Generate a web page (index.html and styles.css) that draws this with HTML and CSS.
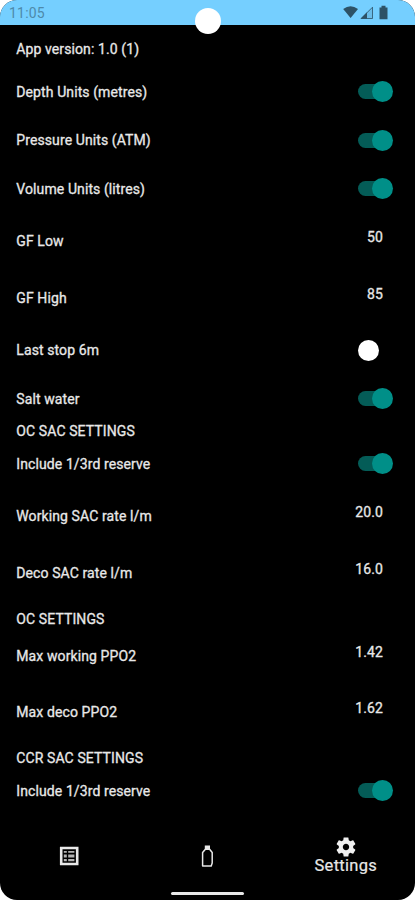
FILE: index.html
```
<!DOCTYPE html>
<html lang="en">
  <head>
    <meta charset="utf-8" />
    <title>Settings</title>
    <link rel="stylesheet" href="styles.css" />
  </head>

  <body>
    <div class="phone">
      <!-- Android status bar -->
      <div class="status-bar">
        <span class="clock">11:05</span>
        <div class="camera"></div>
        <svg class="status-icons" width="48" height="16" viewBox="0 0 48 16">
          <path d="M0.2 4 Q7.5 -1.5 15 4 L7.6 13 Z" />
          <path d="M18 13.5 L30 1.5 V13.5 Z" opacity="0.15" />
          <path d="M17.5 13.8 L24 7.3 V13.8 Z" />
          <path d="M18.2 13.5 L29.5 2.2 V13.5 Z" fill="none" stroke="#2d5266" stroke-width="0.8" />
          <path d="M36.5 2.5 h2 v-1.7 h4 v1.7 h2 v11.7 h-8 z" />
        </svg>
      </div>

      <!-- Settings list -->
      <div class="settings">
        <p class="header version">App version: 1.0 (1)</p>
        <div class="row"><span>Depth Units (metres)</span><button class="switch on"></button></div>
        <div class="row"><span>Pressure Units (ATM)</span><button class="switch on"></button></div>
        <div class="row"><span>Volume Units (litres)</span><button class="switch on"></button></div>
        <div class="row entry"><span>GF Low</span><span class="value">50</span></div>
        <div class="row entry"><span>GF High</span><span class="value">85</span></div>
        <div class="row"><span>Last stop 6m</span><button class="switch"></button></div>
        <div class="row"><span>Salt water</span><button class="switch on"></button></div>

        <p class="header">OC SAC SETTINGS</p>
        <div class="row"><span>Include 1/3rd reserve</span><button class="switch on"></button></div>
        <div class="row entry"><span>Working SAC rate l/m</span><span class="value">20.0</span></div>
        <div class="row entry"><span>Deco SAC rate l/m</span><span class="value">16.0</span></div>

        <p class="header spaced">OC SETTINGS</p>
        <div class="row entry"><span>Max working PPO2</span><span class="value">1.42</span></div>
        <div class="row entry"><span>Max deco PPO2</span><span class="value">1.62</span></div>

        <p class="header spaced">CCR SAC SETTINGS</p>
        <div class="row"><span>Include 1/3rd reserve</span><button class="switch on"></button></div>
      </div>

      <!-- Bottom tabs -->
      <div class="tabs">
        <div class="tab">
          <svg width="20" height="20" viewBox="0 0 20 20">
            <path d="M2.2 2 h16 v16 h-16 z" fill="none" stroke="#e8e8e8" stroke-width="2.6" />
            <path d="M4.8 4.9 h3 v1.8 h-3 z M9.2 4.9 h6.2 v1.8 h-6.2 z M4.8 8.6 h3 v3 h-3 z M9.2 8.6 h6.2 v3 h-6.2 z M4.8 12.9 h3 v2.4 h-3 z M9.2 12.9 h6.2 v2.4 h-6.2 z" fill="#b4b4b4" />
          </svg>
        </div>
        <div class="tab">
          <svg width="14" height="24" viewBox="0 0 14 24">
            <path d="M2.6 22 V8.5 L5.4 5.2 H9.6 L12.2 8.5 V19 L11.2 22 Z" fill="none" stroke="#e8e8e8" stroke-width="1.5" stroke-linejoin="round" />
            <path d="M4.8 1.5 h5.2 v3.5 h-5.2 z" fill="#e8e8e8" />
          </svg>
        </div>
        <div class="tab active">
          <svg width="24" height="24" viewBox="0 0 24 24">
            <path d="M19.14 12.94c.04-.3.06-.61.06-.94 0-.32-.02-.64-.07-.94l2.03-1.58c.18-.14.23-.41.12-.61l-1.92-3.32c-.12-.22-.37-.29-.59-.22l-2.39.96c-.5-.38-1.03-.7-1.62-.94l-.36-2.54c-.04-.24-.24-.41-.48-.41h-3.84c-.24 0-.43.17-.47.41l-.36 2.54c-.59.24-1.13.57-1.62.94l-2.39-.96c-.22-.08-.47 0-.59.22L2.74 8.87c-.12.21-.08.47.12.61l2.03 1.58c-.05.3-.09.63-.09.94s.02.64.07.94l-2.03 1.58c-.18.14-.23.41-.12.61l1.92 3.32c.12.22.37.29.59.22l2.39-.96c.5.38 1.03.7 1.62.94l.36 2.54c.05.24.24.41.48.41h3.84c.24 0 .44-.17.47-.41l.36-2.54c.59-.24 1.13-.56 1.62-.94l2.39.96c.22.08.47 0 .59-.22l1.92-3.32c.12-.22.07-.47-.12-.61l-2.01-1.58zM12 15.2c-1.76 0-3.2-1.44-3.2-3.2s1.44-3.2 3.2-3.2 3.2 1.44 3.2 3.2-1.44 3.2-3.2 3.2z" fill="#f0f0f0" />
          </svg>
          <span>Settings</span>
        </div>
      </div>
      <div class="home-bar"></div>
    </div>
  </body>
</html>
```
FILE: styles.css
```
body {
  margin: 0;
  background-color: #ffffff;
  font-family: Roboto, sans-serif;
}
.phone {
  position: relative;
  display: flex;
  flex-direction: column;
  height: 900px;
  overflow: hidden;
  border-radius: 17px;
  background-color: #000000;
  color: #e8e8e8;
}
.status-bar {
  display: flex;
  justify-content: space-between;
  box-sizing: border-box;
  height: 25px;
  padding: 5px 24px 0 9px;
  background-color: #75cfff;
}
.clock {
  font-size: 14px;
  line-height: 17px;
  letter-spacing: 0.2px;
  color: #4e8aaa;
}
.camera {
  position: absolute;
  top: 8px;
  left: 195px;
  width: 26px;
  height: 26px;
  border-radius: 50%;
  background-color: #ffffff;
}
.status-icons {
  fill: #2d5266;
}
.settings {
  padding: 16px 22.5px 0 16.3px;
  font-size: 14px;
  letter-spacing: 0.1px;
  -webkit-text-stroke: 0.3px #e8e8e8;
}
.header {
  margin: 0;
  height: 16.5px;
  line-height: 16.5px;
}
.header.version {
  margin-bottom: 10.2px;
}
.header.spaced {
  margin-top: 9.6px;
}
.row {
  display: flex;
  align-items: center;
  justify-content: space-between;
  height: 48.5px;
}
.row.entry {
  height: 56.5px;
}
.value {
  padding: 0 9.5px 8px 0;
}
.switch {
  display: flex;
  align-items: center;
  width: 35px;
  height: 21px;
  padding: 0;
  border: none;
  background: none;
}
.switch::after {
  content: "";
  width: 21px;
  height: 21px;
  border-radius: 50%;
  background-color: #ffffff;
}
.switch.on::before {
  content: "";
  width: 25px;
  height: 15px;
  margin-right: -11px;
  border-radius: 7.5px;
  background-color: #045c57;
}
.switch.on::after {
  background-color: #008f88;
}
.tabs {
  display: flex;
  margin-top: auto;
  height: 56px;
}
.tab {
  display: flex;
  flex: 1;
  flex-direction: column;
  align-items: center;
  justify-content: center;
  font-size: 16.5px;
  line-height: 14px;
  letter-spacing: 0.3px;
}
.tab.active {
  padding-bottom: 4px;
  -webkit-text-stroke: 0.2px #e8e8e8;
}
.home-bar {
  width: 73px;
  height: 3px;
  margin: 8px auto 5px;
  border-radius: 2px;
  background-color: #e8e8e8;
}
```
